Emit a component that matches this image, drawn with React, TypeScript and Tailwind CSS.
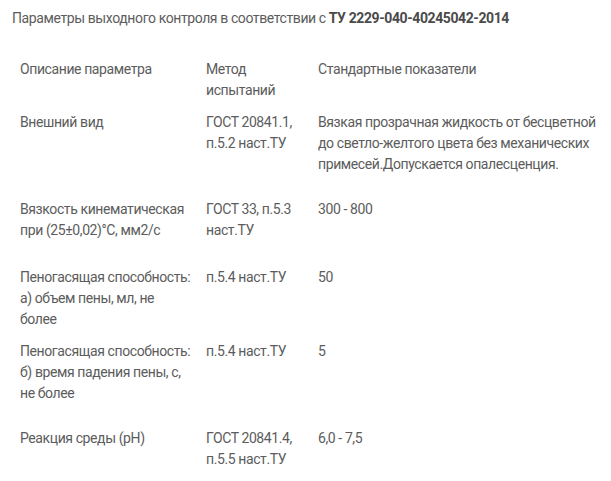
const rows: { name: string[]; method: string[]; value: string[]; pad: string }[] = [
  {
    name: ["Описание параметра"],
    method: ["Метод", "испытаний"],
    value: ["Стандартные показатели"],
    pad: "pb-[11px]",
  },
  {
    name: ["Внешний вид"],
    method: ["ГОСТ 20841.1,", "п.5.2 наст.ТУ"],
    value: [
      "Вязкая прозрачная жидкость от бесцветной",
      "до светло-желтого цвета без механических",
      "примесей.Допускается опалесценция.",
    ],
    pad: "pb-[24px]",
  },
  {
    name: ["Вязкость кинематическая", "при (25±0,02)°С, мм2/с"],
    method: ["ГОСТ 33, п.5.3", "наст.ТУ"],
    value: ["300 - 800"],
    pad: "pb-[26px]",
  },
  {
    name: ["Пеногасящая способность:", "а) объем пены, мл, не", "более"],
    method: ["п.5.4 наст.ТУ"],
    value: ["50"],
    pad: "pb-[11px]",
  },
  {
    name: ["Пеногасящая способность:", "б) время падения пены, с,", "не более"],
    method: ["п.5.4 наст.ТУ"],
    value: ["5"],
    pad: "pb-[24px]",
  },
  {
    name: ["Реакция среды (pH)"],
    method: ["ГОСТ 20841.4,", "п.5.5 наст.ТУ"],
    value: ["6,0 - 7,5"],
    pad: "pb-0",
  },
]

function Lines({ lines }: { lines: string[] }) {
  return (
    <>
      {lines.map((l, i) => (
        <div key={i} className="whitespace-nowrap">
          {l}
        </div>
      ))}
    </>
  )
}

export default function App() {
  return (
    <div className="min-h-[481px] w-[611px] bg-white font-['Roboto',sans-serif] text-[14px] leading-[21px] tracking-[-0.4px] text-[#5c5c5c]">
      <p className="px-3 pt-[8px]">
        Параметры выходного контроля в соответствии с{" "}
        <b className="font-bold text-[#4a4a4a]">ТУ 2229-040-40245042-2014</b>
      </p>

      <div className="mx-3 mt-[30px] grid grid-cols-[186px_112px_1fr]">
        {rows.map((r, i) => (
          <div key={i} className={`col-span-3 grid grid-cols-subgrid ${r.pad}`}>
            <div className="px-2">
              <Lines lines={r.name} />
            </div>
            <div className="px-2">
              <Lines lines={r.method} />
            </div>
            <div className="px-2">
              <Lines lines={r.value} />
            </div>
          </div>
        ))}
      </div>
    </div>
  )
}
